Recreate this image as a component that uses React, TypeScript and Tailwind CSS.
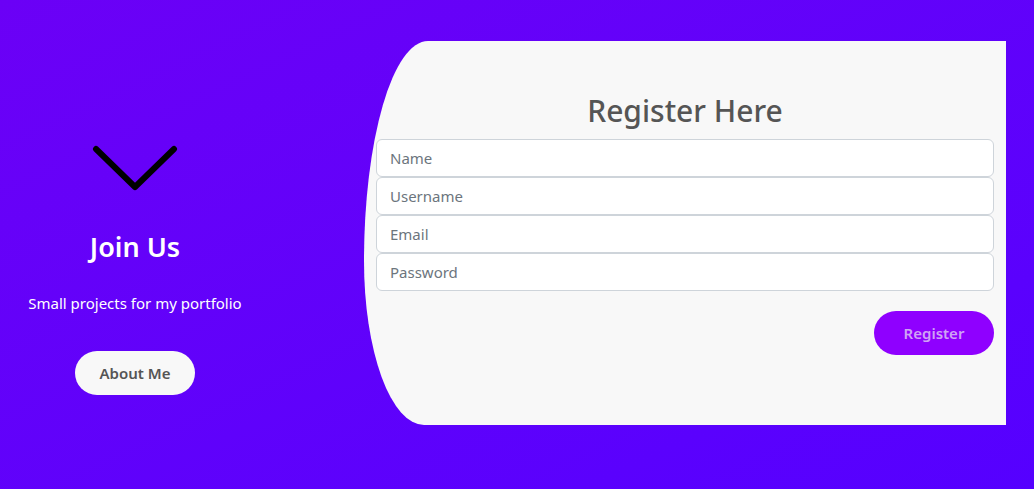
const font = { fontFamily: '"Noto Sans", "Open Sans", sans-serif' };

const fields = ['Name', 'Username', 'Email', 'Password'];

export default function App() {
  return (
    <div className="flex h-[489px] w-full bg-linear-to-br from-[#6b00f6] to-[#5500ff]" style={font}>
      <div className="flex w-[270px] shrink-0 flex-col items-center pt-[144px]">
        <svg width="86" height="48" viewBox="0 0 86 48" fill="none">
          <path d="M4 5 L43 43 L82 5" stroke="#000" strokeWidth="6" strokeLinecap="round" strokeLinejoin="round" />
        </svg>
        <h2 className="mt-[41px] text-[27px] font-semibold leading-none text-white">Join Us</h2>
        <p className="mt-[36px] text-[15px] leading-none text-white">Small projects for my portfolio</p>
        <button className="mt-[40px] h-[44px] w-[120px] rounded-full bg-[#f8f8f8] text-[15px] font-semibold text-[#555]">
          About Me
        </button>
      </div>

      <div className="mt-[41px] ml-[94px] flex h-[384px] w-[642px] flex-col bg-[#f8f8f8] pr-[12px] pl-[12px] rounded-tl-[64px_220px] rounded-bl-[60px_164px]">
        <h1 className="mt-[52px] mb-[10px] text-center text-[30px] leading-[36px] font-medium text-[#555]">
          Register Here
        </h1>
        <div className="flex flex-col">
          {fields.map((f) => (
            <input
              key={f}
              placeholder={f}
              type={f === 'Password' ? 'password' : 'text'}
              className="h-[38px] w-full rounded-[6px] border border-[#ced4da] bg-white px-[13px] text-[15px] text-[#495057] outline-none placeholder:text-[#6c757d]"
            />
          ))}
        </div>
        <div className="mt-[20px] flex justify-end">
          <button className="h-[44px] w-[120px] rounded-full bg-[#8f00ff] text-[15px] font-semibold text-[#cfa3f5]">
            Register
          </button>
        </div>
      </div>
    </div>
  );
}
